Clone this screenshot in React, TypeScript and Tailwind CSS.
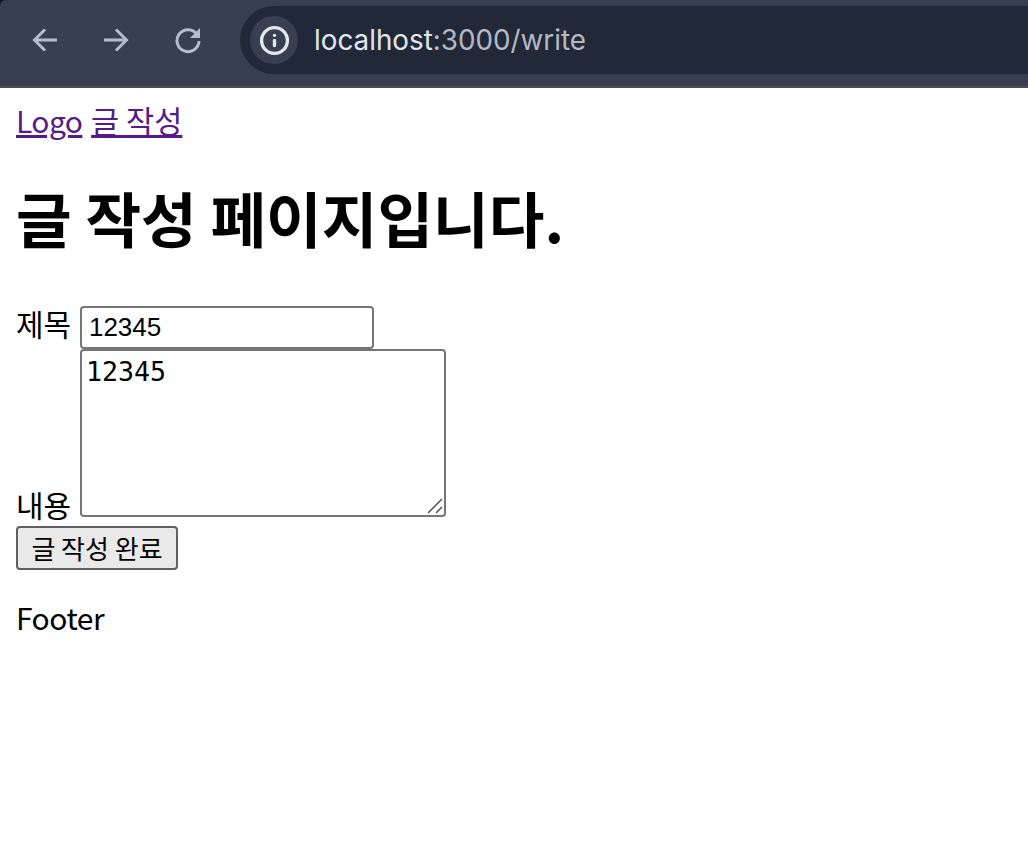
import { Info } from "lucide-react"

const sans = "font-['Noto_Sans_CJK_KR','Noto_Sans',sans-serif]"

function NavArrow({ flip }: { flip?: boolean }) {
  return (
    <svg viewBox="0 0 26 26" className={`h-[26px] w-[26px] text-[#b4bccd] ${flip ? "-scale-x-100" : ""}`} fill="none" stroke="currentColor" strokeWidth="3">
      <path d="M25 13H3M13 2.5 2.5 13 13 23.5" />
    </svg>
  )
}

function Reload() {
  return (
    <svg viewBox="0 0 28 28" className="h-[28px] w-[28px] text-[#b4bccd]" fill="none">
      <path d="M23.2 8.6A11 11 0 1 0 25 15" stroke="currentColor" strokeWidth="3" />
      <path d="M26 2v10H16z" fill="currentColor" />
    </svg>
  )
}

function BrowserBar() {
  return (
    <div className="bg-[#14161c]">
      <div className="flex h-[88px] items-start rounded-tl-[6px] border-b-2 border-[#4a4d55] bg-[#383f50] pt-1.5 font-['Inter',sans-serif]">
        <div className="flex h-[68px] w-[240px] shrink-0 items-center pl-[32px]">
          <NavArrow />
          <div className="ml-[45px]">
            <NavArrow flip />
          </div>
          <div className="ml-[45px]">
            <Reload />
          </div>
        </div>
        <div className="flex h-[68px] flex-1 items-center rounded-l-[34px] bg-[#212838] pl-2.5">
          <div className="flex h-12 w-12 items-center justify-center rounded-full bg-[#383f50]">
            <Info className="h-[31px] w-[31px] text-[#e3e6ed]" strokeWidth={2.6} />
          </div>
          <span className="ml-4 pt-0.5 text-[27.8px] text-[#e3e6ed]">
            localhost<span className="text-[#b4b9c5]">:3000/write</span>
          </span>
        </div>
      </div>
    </div>
  )
}

export default function App() {
  return (
    <div className="h-[868px] overflow-hidden bg-white">
      <BrowserBar />
      <div className={`${sans} px-4 pt-3 text-[30px] leading-[40px] text-black`}>
        <nav className="h-[40px]">
          <a href="#logo" className="tracking-[-0.6px] text-[#551a8b] underline">Logo</a>{" "}
          <a href="#write" className="ml-0.5 text-[30.6px] text-[#551a8b] underline">글 작성</a>
        </nav>
        <h1 className="mt-[41px] mb-[49px] text-[60.5px] leading-[72px] font-bold">
          글 작성 페이지입니다.
        </h1>
        <form className="leading-[42px]">
          <div className="h-[47px]">
            <label htmlFor="title" className="mr-0.5">제목</label>{" "}
            <input
              id="title"
              defaultValue="12345"
              className="h-[43px] w-[294px] rounded-[4px] border-2 border-[#767676] px-[7px] font-['Liberation_Sans',sans-serif] text-[26px] text-black outline-none"
            />
          </div>
          <div className="h-[168px]">
            <label htmlFor="content" className="mr-0.5">내용</label>{" "}
            <span className="relative inline-block">
              <textarea
                id="content"
                defaultValue="12345"
                className="block h-[168px] w-[366px] resize-none rounded-[4px] border-2 border-[#767676] px-1 pt-[3px] font-['DejaVu_Sans_Mono',monospace] text-[26.6px] leading-[36px] text-black outline-none"
              />
              <svg viewBox="0 0 16 16" className="pointer-events-none absolute right-[3px] bottom-[3px] h-4 w-4" stroke="#555" strokeWidth="1.5">
                <path d="M1 15 15 1M9 15l6-6" />
              </svg>
            </span>
          </div>
          <button
            type="button"
            className="mt-[9px] block h-[44px] w-[162px] rounded-[4px] border-2 border-[#5f5f5f] bg-[#e9e9e9] text-[26px] leading-none text-black"
          >
            글 작성 완료
          </button>
        </form>
        <p className="mt-[27px] tracking-[-0.5px]">Footer</p>
      </div>
    </div>
  )
}
